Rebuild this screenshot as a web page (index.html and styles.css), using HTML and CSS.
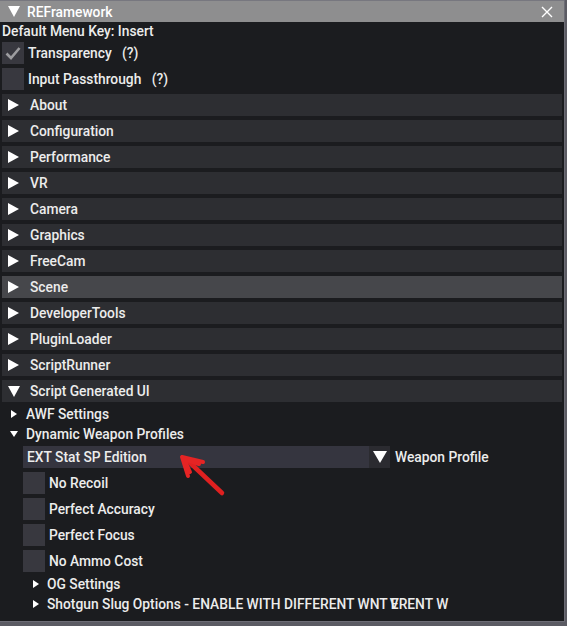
FILE: index.html
```html
<!DOCTYPE html>
<html>
<head>
<meta charset="utf-8">
<link rel="stylesheet" href="styles.css">
</head>
<body>
<div class="window">
  <div class="titlebar">
    <span class="tri-down big"></span>
    <span class="title">REFramework</span>
    <svg class="close" width="12" height="12" viewBox="0 0 12 12"><path d="M1 1L11 11M11 1L1 11" stroke="#ffffff" stroke-width="1.4"/></svg>
  </div>
  <div class="content">
    <div class="textline">Default Menu Key: Insert</div>
    <div class="checkrow">
      <span class="box"><svg width="22" height="22" viewBox="0 0 22 22"><path d="M4.5 11.5L9 16L17.5 6" fill="none" stroke="#9c9c9f" stroke-width="2.6"/></svg></span>
      <span class="label">Transparency&nbsp;&nbsp; (?)</span>
    </div>
    <div class="checkrow">
      <span class="box"></span>
      <span class="label">Input Passthrough&nbsp;&nbsp; (?)</span>
    </div>
    <div class="header"><span class="tri-right big"></span>About</div>
    <div class="header"><span class="tri-right big"></span>Configuration</div>
    <div class="header"><span class="tri-right big"></span>Performance</div>
    <div class="header"><span class="tri-right big"></span>VR</div>
    <div class="header"><span class="tri-right big"></span>Camera</div>
    <div class="header"><span class="tri-right big"></span>Graphics</div>
    <div class="header"><span class="tri-right big"></span>FreeCam</div>
    <div class="header hover"><span class="tri-right big"></span>Scene</div>
    <div class="header"><span class="tri-right big"></span>DeveloperTools</div>
    <div class="header"><span class="tri-right big"></span>PluginLoader</div>
    <div class="header"><span class="tri-right big"></span>ScriptRunner</div>
    <div class="header"><span class="tri-down big"></span>Script Generated UI</div>
    <div class="node lvl1 first"><span class="tri-right small"></span>AWF Settings</div>
    <div class="node lvl1"><span class="tri-down small"></span>Dynamic Weapon Profiles</div>
    <div class="comborow">
      <div class="combo">
        <span class="combo-value">EXT Stat SP Edition</span>
        <span class="combo-btn"><span class="tri-down big"></span></span>
      </div>
      <span class="label">Weapon Profile</span>
    </div>
    <div class="checkrow sub"><span class="box"></span><span class="label">No Recoil</span></div>
    <div class="checkrow sub"><span class="box"></span><span class="label">Perfect Accuracy</span></div>
    <div class="checkrow sub"><span class="box"></span><span class="label">Perfect Focus</span></div>
    <div class="checkrow sub"><span class="box"></span><span class="label">No Ammo Cost</span></div>
    <div class="node lvl2 first"><span class="tri-right small"></span>OG Settings</div>
    <div class="node lvl2 clip"><span class="tri-right small"></span><span class="cliptext">Shotgun Slug Options - ENABLE WITH DIFFERENT WNT <span class="ov">E<span class="ovv">V</span></span>RENT W</span></div>
  </div>
  <svg class="arrow" width="60" height="50" viewBox="0 0 60 50">
    <path d="M8 6L44 40" stroke="#e02020" stroke-width="4.5" stroke-linecap="round"/>
    <path d="M4 4L25 9M4 4L10 23M6 6L21 11M6 6L12 19" stroke="#e52424" stroke-width="4" stroke-linecap="round"/>
  </svg>
</div>
</body>
</html>
```
FILE: styles.css
```css
html, body {
  margin: 0;
  padding: 0;
  background: #5b5b63;
}
body {
  width: 567px;
  height: 626px;
  overflow: hidden;
  font-family: Roboto, "Noto Sans", "Liberation Sans", sans-serif;
  font-weight: 500;
  font-size: 13.8px;
  color: #ececec;
}
.window {
  position: relative;
  width: 565px;
  height: 622px;
  background: #1b1c1f;
  box-sizing: border-box;
  border-right: 1px solid #6c6c75;
  border-bottom: 1px solid #6c6c75;
  overflow: hidden;
}
.titlebar {
  height: 22px;
  background: #8e8e8f;
  display: flex;
  align-items: center;
  padding-left: 8px;
  box-sizing: border-box;
  border-top: 1px solid #77777f;
  color: #ffffff;
  font-size: 13.8px;
}
.titlebar .tri-down.big {
  margin-right: 7px;
}
.close {
  margin-left: auto;
  margin-right: 11px;
}
.content {
  padding: 0 2px 0 2px;
}
.textline {
  height: 18px;
  line-height: 18px;
}
.checkrow {
  display: flex;
  align-items: center;
  height: 22px;
  margin-top: 4px;
}
.checkrow:nth-child(2) {
  margin-top: 2px;
}
.box {
  width: 22px;
  height: 22px;
  background: #38383f;
  display: block;
  flex: none;
}
.box svg {
  display: block;
}
.checkrow .label {
  margin-left: 4px;
}
.checkrow.sub {
  margin-left: 21px;
}
.header {
  height: 22px;
  margin-top: 4px;
  background: #2d2e32;
  display: flex;
  align-items: center;
  padding-left: 6px;
}
.header.hover {
  background: #46474b;
}
.tri-right.big {
  width: 0;
  height: 0;
  border-top: 6px solid transparent;
  border-bottom: 6px solid transparent;
  border-left: 11px solid #ffffff;
  margin-right: 11px;
}
.tri-down.big {
  width: 0;
  height: 0;
  border-left: 6px solid transparent;
  border-right: 6px solid transparent;
  border-top: 11px solid #ffffff;
  margin-right: 10px;
}
.node {
  height: 20px;
  display: flex;
  align-items: center;
}
.node.first {
  margin-top: 2px;
}
.node.lvl1 {
  padding-left: 8px;
}
.node.lvl2 {
  padding-left: 30px;
}
.tri-right.small {
  width: 0;
  height: 0;
  border-top: 4px solid transparent;
  border-bottom: 4px solid transparent;
  border-left: 6px solid #ffffff;
  margin-right: 9px;
  margin-left: 1px;
}
.node.lvl2 .tri-right.small {
  margin-right: 8px;
}
.tri-down.small {
  width: 0;
  height: 0;
  border-left: 4px solid transparent;
  border-right: 4px solid transparent;
  border-top: 6px solid #ffffff;
  margin-right: 8px;
}
.comborow {
  display: flex;
  align-items: center;
  margin-top: 2px;
  margin-left: 21px;
  height: 22px;
}
.combo {
  width: 367px;
  height: 22px;
  background: #35353f;
  display: flex;
  align-items: center;
}
.combo-value {
  padding-left: 4px;
  flex: 1;
}
.combo-btn {
  width: 21px;
  height: 22px;
  background: #2b2b30;
  display: flex;
  align-items: center;
  justify-content: center;
}
.combo-btn .tri-down.big {
  margin: 0;
  border-left-width: 7px;
  border-right-width: 7px;
  border-top-width: 12px;
}
.comborow .label {
  margin-left: 5px;
}
.node.clip {
  width: 448px;
  box-sizing: border-box;
  overflow: hidden;
  white-space: nowrap;
}
.cliptext {
  white-space: nowrap;
}
.ov {
  position: relative;
}
.ovv {
  position: absolute;
  left: -1px;
  top: 0;
}
.arrow {
  position: absolute;
  left: 178px;
  top: 453px;
}
```
